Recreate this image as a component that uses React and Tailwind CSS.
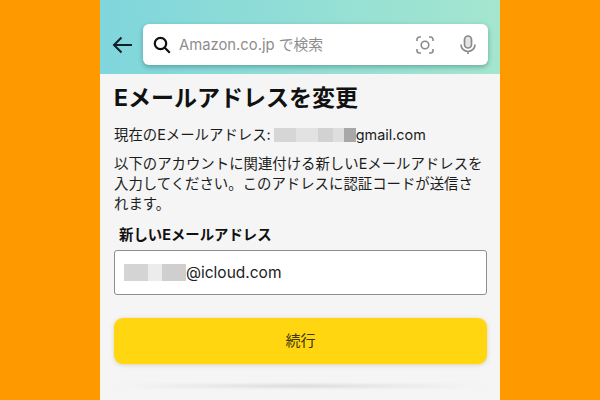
const FONT = "font-['Inter','Noto_Sans_CJK_JP',sans-serif]"

const Blur = ({ className, children }) => (
  <span className={`inline-flex h-[14px] align-middle overflow-hidden ${className}`}>{children}</span>
)

export default function App() {
  return (
    <div className={`w-[600px] h-[400px] overflow-hidden bg-[#ff9900] flex justify-center ${FONT}`}>
      <div className="w-[400px] h-full flex flex-col bg-[#f5f5f5]">
        {/* Header */}
        <header className="h-[74px] shrink-0 bg-gradient-to-r from-[#7fd6dc] to-[#a4e6cf] flex items-center pt-[15px] pl-[12px] pr-[12px] gap-[10px]">
          <svg width="21" height="18" viewBox="0 0 21 18" fill="none" stroke="#0f2028" strokeWidth="2" className="shrink-0">
            <path d="M20 9H2M9.500 1.500 2 9l7.500 7.500" />
          </svg>
          <div className="flex-1 h-[41px] bg-white rounded-[6px] shadow-[0_2px_5px_rgba(0,60,70,0.35)] flex items-center pl-[10px] pr-[12px]">
            <svg width="18" height="18" viewBox="0 0 18 18" fill="none" stroke="#111" strokeWidth="2.200" className="shrink-0">
              <circle cx="7.500" cy="7.500" r="5.700" />
              <path d="m11.800 11.800 5 5" />
            </svg>
            <span className="ml-[8px] pt-[2px] text-[14.8px] leading-none text-[#8d8d8d] flex-1 whitespace-nowrap">Amazon.co.jp で検索</span>
            <svg width="18" height="18" viewBox="0 0 18 18" fill="none" stroke="#8a8a8a" strokeWidth="1.600" className="shrink-0 mr-[26px]">
              <path d="M1 5V3.500A2.500 2.500 0 0 1 3.500 1H5M13 1h1.500A2.500 2.500 0 0 1 17 3.500V5M17 13v1.500a2.500 2.500 0 0 1-2.500 2.500H13M5 17H3.500A2.500 2.500 0 0 1 1 14.500V13" />
              <circle cx="9" cy="9" r="3.800" />
            </svg>
            <svg width="16" height="20" viewBox="0 0 16 20" fill="none" stroke="#8a8a8a" strokeWidth="1.700" className="shrink-0">
              <rect x="4.500" y="1" width="7" height="12" rx="3.500" fill="#e4e4e4" />
              <path d="M1 9.500a7 7 0 0 0 14 0M8 16.500V19" />
            </svg>
          </div>
        </header>

        {/* Form */}
        <main className="flex-1 flex flex-col px-[14px]">
          <h1 className="mt-[9px] text-[23px] leading-[30px] font-bold text-[#111] whitespace-nowrap">Eメールアドレスを変更</h1>
          <p className="mt-[12px] text-[14.4px] leading-[20px] text-[#1c1c1c] whitespace-nowrap flex items-center">
            現在のEメールアドレス:
            <Blur className="ml-[3px] w-[82px]">
              <span className="w-[22px] bg-[#d6d6d6]" />
              <span className="w-[22px] bg-[#e2e2e2]" />
              <span className="w-[15px] bg-[#d2d2d2]" />
              <span className="w-[11px] bg-[#dedede]" />
              <span className="w-[12px] bg-[#a8a8a8]" />
            </Blur>
            gmail.com
          </p>
          <p className="mt-[9px] w-[372px] text-[14.4px] leading-[20px] text-[#1c1c1c] whitespace-nowrap">
            以下のアカウントに関連付ける新しいEメールアドレスを<br />
            入力してください。このアドレスに認証コードが送信さ<br />
            れます。
          </p>
          <label className="mt-[11px] ml-[5px] text-[14.4px] leading-[20px] font-bold text-[#111]">新しいEメールアドレス</label>
          <div className="mt-[5px] h-[45px] w-[373px] shrink-0 bg-white border border-[#8e8e8e] rounded-[3px] flex items-center pl-[9px] text-[15.5px] text-[#222]">
            <Blur className="w-[62px] h-[17px]">
              <span className="w-[24px] bg-[#d4d4d4]" />
              <span className="w-[14px] bg-[#ececec]" />
              <span className="w-[24px] bg-[#cfcfcf]" />
            </Blur>
            @icloud.com
          </div>
          <button className="mt-[23px] h-[46px] w-[373px] shrink-0 bg-[#ffd60f] rounded-[9px] shadow-[0_1px_4px_rgba(170,140,40,0.35)] text-[15px] text-[#3c3410]">
            続行
          </button>
          <div className="mt-[20px] h-[4px] bg-gradient-to-r from-[#f5f5f5] via-[#dcdcdc] to-[#f5f5f5] blur-[1px]" />
        </main>
      </div>
    </div>
  )
}
